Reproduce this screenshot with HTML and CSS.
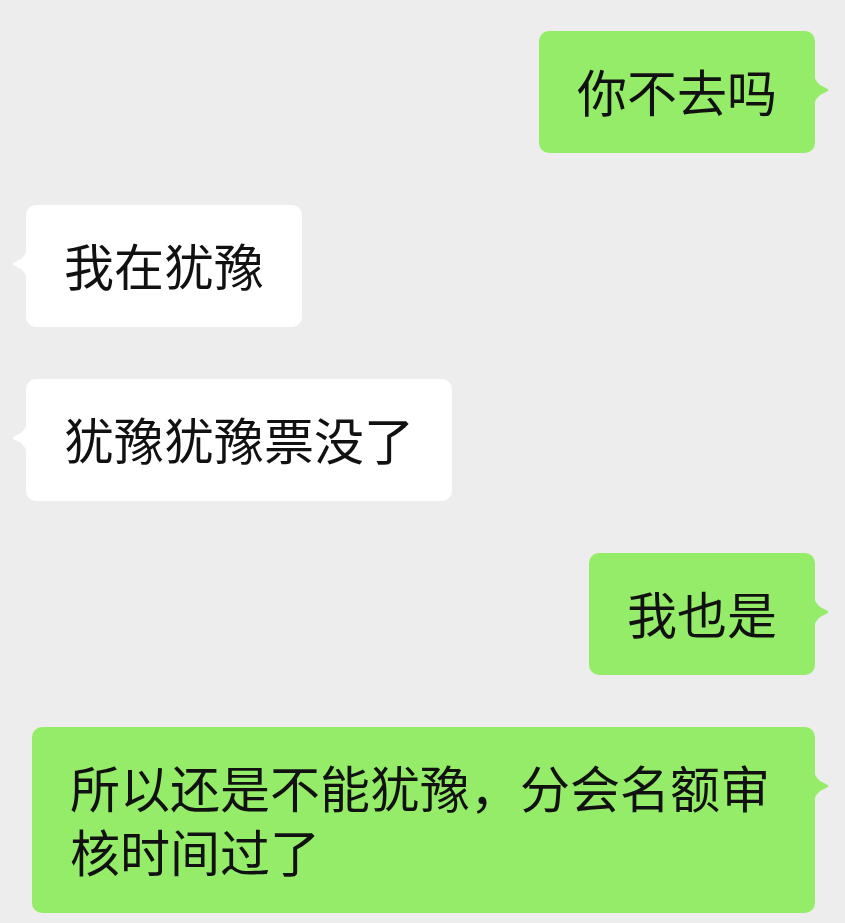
FILE: index.html
```html
<!DOCTYPE html>
<html lang="zh-CN">
<head>
    <meta charset="UTF-8">
    <meta name="viewport" content="width=device-width, initial-scale=1.0">
    <title>聊天记录</title>
    <link rel="stylesheet" href="styles.css">
</head>
<body>
    <div class="chat">
        <div class="row row-me">
            <div class="bubble bubble-me">你不去吗
                <svg class="tail tail-right" viewBox="0 0 16 36"><path d="M0 0 C0 7 3 10 6 13 L13 16.5 Q15.5 18 13 19.5 L6 23 C3 26 0 29 0 36 Z"/></svg>
            </div>
        </div>
        <div class="row row-other">
            <div class="bubble bubble-other">我在犹豫
                <svg class="tail tail-left" viewBox="0 0 16 36"><path d="M16 0 C16 7 13 10 10 13 L3 16.5 Q0.5 18 3 19.5 L10 23 C13 26 16 29 16 36 Z"/></svg>
            </div>
        </div>
        <div class="row row-other">
            <div class="bubble bubble-other">犹豫犹豫票没了
                <svg class="tail tail-left" viewBox="0 0 16 36"><path d="M16 0 C16 7 13 10 10 13 L3 16.5 Q0.5 18 3 19.5 L10 23 C13 26 16 29 16 36 Z"/></svg>
            </div>
        </div>
        <div class="row row-me">
            <div class="bubble bubble-me">我也是
                <svg class="tail tail-right" viewBox="0 0 16 36"><path d="M0 0 C0 7 3 10 6 13 L13 16.5 Q15.5 18 13 19.5 L6 23 C3 26 0 29 0 36 Z"/></svg>
            </div>
        </div>
        <div class="row row-me">
            <div class="bubble bubble-me">所以还是不能犹豫，分会名额审核时间过了
                <svg class="tail tail-right" viewBox="0 0 16 36"><path d="M0 0 C0 7 3 10 6 13 L13 16.5 Q15.5 18 13 19.5 L6 23 C3 26 0 29 0 36 Z"/></svg>
            </div>
        </div>
    </div>
</body>
</html>
```

FILE: styles.css
```css
body {
    margin: 0;
    background-color: #ededed;
    font-family: "Noto Sans CJK SC", "Noto Sans", sans-serif;
}
.chat {
    display: flex;
    flex-direction: column;
    gap: 52px;
    padding: 31px 30px 20px 26px;
}
.row {
    display: flex;
}
.row-me {
    justify-content: flex-end;
}
.row-other {
    justify-content: flex-start;
}
.bubble {
    position: relative;
    max-width: 707px;
    padding: 27px 38px 31px;
    border-radius: 10px;
    font-size: 50px;
    line-height: 64px;
    color: #111;
}
.bubble-me {
    background-color: #95ec69;
}
.bubble-other {
    background-color: #fff;
}
.tail {
    position: absolute;
    top: 41px;
    width: 16px;
    height: 36px;
}
.tail-right {
    right: -15px;
    fill: #95ec69;
}
.tail-left {
    left: -15px;
    fill: #fff;
}
```
